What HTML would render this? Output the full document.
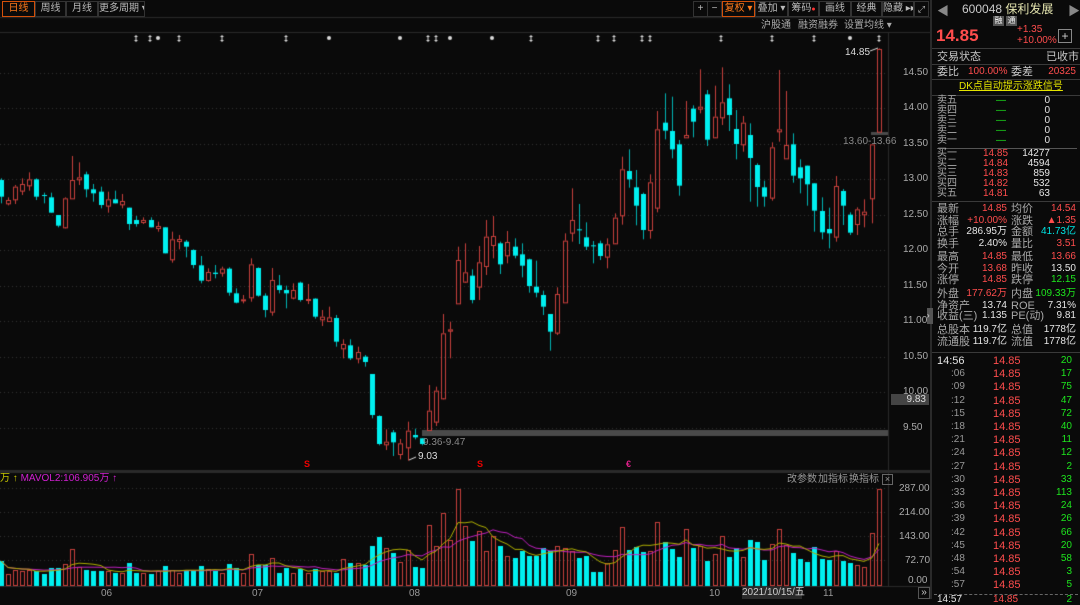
<!DOCTYPE html>
<html><head><meta charset="utf-8">
<style>
*{margin:0;padding:0;box-sizing:border-box}
body{width:1080px;height:599px;background:#0a0a0a;overflow:hidden;position:relative;font-family:"Liberation Sans","Noto Sans CJK SC",sans-serif;font-size:10px;color:#c8c8c8}
.a{position:absolute;white-space:nowrap;line-height:1}
.btn{position:absolute;top:1px;height:16px;border:1px solid #333;color:#bbb;font-size:10px;line-height:14px;text-align:center;white-space:nowrap;overflow:hidden}
.r{color:#ff4d4d}.g{color:#1ee61e}.c{color:#00e5e5}.w{color:#e6e6e6}.y{color:#e6e600}
.hl{position:absolute;height:1px;background:#3a3a3a}
.rt{text-align:right}
</style></head><body>
<canvas id="cv" width="930" height="599" style="position:absolute;left:0;top:0"></canvas>

<div class="btn" style="left:2px;width:33px;border-color:#d2500a;color:#ff7a1a">日线</div>
<div class="btn" style="left:35px;width:31px">周线</div>
<div class="btn" style="left:66px;width:32px">月线</div>
<div class="btn" style="left:98px;width:47px">更多周期 ▾</div>
<div class="btn" style="left:693px;width:15px">+</div>
<div class="btn" style="left:707px;width:15px">−</div>
<div class="btn" style="left:722px;width:33px;border-color:#d2500a;color:#ff7a1a">复权 ▾</div>
<div class="btn" style="left:755px;width:33px">叠加 ▾</div>
<div class="btn" style="left:788px;width:31px">筹码<span style="color:#f33;font-size:7px">●</span></div>
<div class="btn" style="left:819px;width:32px">画线</div>
<div class="btn" style="left:851px;width:31px">经典</div>
<div class="btn" style="left:882px;width:32px">隐藏 ▸▸</div>
<div class="btn" style="left:914px;width:15px;font-size:9px">⤢</div>
<div class="a" style="left:761px;top:21px;color:#aaa">沪股通</div>
<div class="a" style="left:798px;top:21px;color:#aaa">融资融券</div>
<div class="a" style="left:844px;top:21px;color:#aaa">设置均线 ▾</div>

<div class="a" style="left:903px;top:68px;color:#aaa">14.50</div>
<div class="a" style="left:903px;top:103px;color:#aaa">14.00</div>
<div class="a" style="left:903px;top:139px;color:#aaa">13.50</div>
<div class="a" style="left:903px;top:174px;color:#aaa">13.00</div>
<div class="a" style="left:903px;top:210px;color:#aaa">12.50</div>
<div class="a" style="left:903px;top:245px;color:#aaa">12.00</div>
<div class="a" style="left:903px;top:281px;color:#aaa">11.50</div>
<div class="a" style="left:903px;top:316px;color:#aaa">11.00</div>
<div class="a" style="left:903px;top:352px;color:#aaa">10.50</div>
<div class="a" style="left:903px;top:387px;color:#aaa">10.00</div>
<div class="a" style="left:891px;top:394px;width:38px;height:11px;background:#444;color:#ddd;text-align:right;padding-right:3px;line-height:11px">9.83</div>
<div class="a" style="left:903px;top:423px;color:#aaa">9.50</div>
<div class="a" style="left:845px;top:48px;color:#ddd">14.85</div>
<div class="a" style="left:843px;top:137px;color:#888">13.60-13.66</div>
<div class="a" style="left:423px;top:438px;color:#888">9.36-9.47</div>
<div class="a" style="left:418px;top:452px;color:#ddd">9.03</div>

<div class="a" style="left:0;top:474px;color:#c8c800">万 ↑ <span style="color:#d020d0">MAVOL2:106.905万 ↑</span></div>
<div class="a" style="left:787px;top:475px;color:#999">改参数</div>
<div class="a" style="left:818px;top:475px;color:#999">加指标</div>
<div class="a" style="left:849px;top:475px;color:#999">换指标</div>
<div class="a" style="left:882px;top:474px;width:11px;height:11px;border:1px solid #666;color:#999;font-size:9px;text-align:center;line-height:9px">×</div>
<div class="a" style="left:899px;top:484px;color:#aaa">287.00</div>
<div class="a" style="left:899px;top:508px;color:#aaa">214.00</div>
<div class="a" style="left:899px;top:532px;color:#aaa">143.00</div>
<div class="a" style="left:905px;top:556px;color:#aaa">72.70</div>
<div class="a" style="left:908px;top:576px;color:#aaa">0.00</div>
<div class="a" style="left:101px;top:589px;color:#999">06</div>
<div class="a" style="left:252px;top:589px;color:#999">07</div>
<div class="a" style="left:409px;top:589px;color:#999">08</div>
<div class="a" style="left:566px;top:589px;color:#999">09</div>
<div class="a" style="left:709px;top:589px;color:#999">10</div>
<div class="a" style="left:742px;top:587px;width:60px;height:12px;background:#2a2a2a;color:#ccc;text-align:center;line-height:12px">2021/10/15/五</div>
<div class="a" style="left:823px;top:589px;color:#999">11</div>
<div class="a" style="left:918px;top:587px;width:12px;height:12px;border:1px solid #555;color:#ccc;text-align:center;line-height:10px">»</div>
<div class="a" style="left:304px;top:460px;color:#e00;font-size:9px;font-weight:bold">S</div>
<div class="a" style="left:477px;top:460px;color:#e00;font-size:9px;font-weight:bold">S</div>
<div class="a" style="left:626px;top:460px;color:#e0208a;font-size:9px;font-weight:bold">€</div>

<div class="a" style="left:930px;top:0;width:2px;height:599px;background:#2a2a2a"></div>
<div class="a" style="left:927px;top:308px;width:6px;height:16px;background:#555;color:#ddd;font-size:8px;line-height:16px">›</div>
<div class="a" style="left:937px;top:5px;color:#888;font-size:12px">◀</div>
<div class="a" style="left:1068px;top:5px;color:#888;font-size:12px">▶</div>
<div class="a" style="left:962px;top:3px;font-size:12px;color:#ccc">600048 <span style="color:#e6e6b0">保利发展</span></div>
<div class="a" style="left:993px;top:16px;width:11px;height:10px;background:#555;color:#eee;font-size:8px;text-align:center;line-height:10px">融</div>
<div class="a" style="left:1006px;top:16px;width:11px;height:10px;background:#555;color:#eee;font-size:8px;text-align:center;line-height:10px">通</div>
<div class="a r" style="left:936px;top:27px;font-size:17px;font-weight:bold">14.85</div>
<div class="a r" style="left:1017px;top:25px">+1.35</div>
<div class="a r" style="left:1017px;top:36px">+10.00%</div>
<div class="a" style="left:1058px;top:29px;width:14px;height:14px;border:1px solid #888;color:#ccc;text-align:center;line-height:12px;font-size:12px">+</div>
<div class="hl" style="left:932px;top:48px;width:148px"></div>
<div class="a" style="left:937px;top:52px;font-size:11px">交易状态</div>
<div class="a" style="left:1046px;top:52px;font-size:11px">已收市</div>
<div class="hl" style="left:932px;top:64px;width:148px"></div>
<div class="a" style="left:937px;top:67px;font-size:11px">委比</div>
<div class="a r" style="left:968px;top:67px">100.00%</div>
<div class="a" style="left:1011px;top:67px;font-size:11px">委差</div>
<div class="a r rt" style="left:1040px;top:67px;width:36px">20325</div>
<div class="hl" style="left:932px;top:79px;width:148px"></div>
<div class="a y" style="left:959px;top:82px;text-decoration:underline">DK点自动提示涨跌信号</div>
<div class="hl" style="left:932px;top:95px;width:148px"></div>
<div id="rp"></div>

<script>
var rp=document.getElementById('rp'),h='';
function t(x,y,s,cl,st){h+='<div class="a '+(cl||'')+'" style="left:'+x+'px;top:'+y+'px;'+(st||'')+'">'+s+'</div>';}
function tr(x,y,w,s,cl){h+='<div class="a rt '+(cl||'')+'" style="left:'+x+'px;top:'+y+'px;width:'+w+'px">'+s+'</div>';}
var sells=['卖五','卖四','卖三','卖二','卖一'];
for(var i=0;i<5;i++){var y=96+i*10;t(937,y,sells[i],'','color:#aaa');t(996,y,'—','g');tr(1020,y,30,'0','w');}
h+='<div class="hl" style="left:937px;top:148px;width:140px;background:#555"></div>';
var buys=[['买一','14.85','14277'],['买二','14.84','4594'],['买三','14.83','859'],['买四','14.82','532'],['买五','14.81','63']];
for(var i=0;i<5;i++){var y=149+i*10;t(937,y,buys[i][0],'','color:#aaa');t(983,y,buys[i][1],'r');tr(1010,y,40,buys[i][2],'w');}
h+='<div class="hl" style="left:932px;top:201px;width:148px"></div>';
var st=[[209,'最新','14.85','r','均价','14.54','r'],[221,'涨幅','+10.00%','r','涨跌','▲1.35','r'],[232,'总手','286.95万','w','金额','41.73亿','c'],[244,'换手','2.40%','w','量比','3.51','r'],[257,'最高','14.85','r','最低','13.66','r'],[269,'今开','13.68','r','昨收','13.50','w'],[280,'涨停','14.85','r','跌停','12.15','g'],[294,'外盘','177.62万','r','内盘','109.33万','g'],[306,'净资产','13.74','w','ROE','7.31%','w'],[316,'收益(三)','1.135','w','PE(动)','9.81','w'],[330,'总股本','119.7亿','w','总值','1778亿','w'],[342,'流通股','119.7亿','w','流值','1778亿','w']];
st.forEach(function(r){var y=r[0]-5;t(937,y,r[1],'','color:#aaa;font-size:11px');tr(962,y,45,r[2],r[3]);t(1011,y,r[4],'','color:#aaa;font-size:11px');tr(1030,y,46,r[5],r[6]);});
h+='<div class="hl" style="left:932px;top:352px;width:148px"></div>';
var tk=[['14:56',20],[':06',17],[':09',75],[':12',47],[':15',72],[':18',40],[':21',11],[':24',12],[':27',2],[':30',33],[':33',113],[':36',24],[':39',26],[':42',66],[':45',20],[':48',58],[':54',3],[':57',5]];
tk.forEach(function(r,i){var y=356+i*13.2;if(i==0)t(937,y,r[0],'w','font-size:11px');else t(951,y,r[0],'','color:#999');t(993,y,'14.85','r','font-size:11px');tr(1040,y,32,r[1],'g');});
h+='<div class="a" style="left:934px;top:594px;width:144px;border-top:1px dashed #666"></div>';
t(937,595,'14:57','w');t(993,595,'14.85','r');tr(1040,595,32,'2','g');
rp.innerHTML=h;

var cv=document.getElementById('cv'),c=cv.getContext('2d');
c.fillStyle='#2a2a2a';c.fillRect(0,17,930,1);c.fillRect(0,32,930,1);c.fillRect(0,470,930,3);c.fillRect(888,33,1,554);c.fillRect(0,586,930,1);
c.strokeStyle='#333';c.setLineDash([1,3]);c.lineWidth=1;
[73,108,144,179,215,250,286,321,357,392,428,488,512,536,560].forEach(function(y){c.beginPath();c.moveTo(0,y+.5);c.lineTo(888,y+.5);c.stroke();});
c.setLineDash([]);
c.fillStyle='#ddd';
var mk=[[136,0],[150,0],[158,1],[179,0],[222,0],[286,0],[329,1],[400,1],[428,0],[436,0],[450,1],[492,1],[531,0],[598,0],[614,0],[642,0],[650,0],[721,0],[772,0],[814,0],[850,1],[879,0]];
mk.forEach(function(m){if(m[1]){c.beginPath();c.arc(m[0],38,2,0,7);c.fill();}else{c.fillRect(m[0]-.5,35,1,7);c.fillRect(m[0]-1.5,36,3,1);c.fillRect(m[0]-1.5,40,3,1);}});
c.fillStyle='#4a4a4a';c.fillRect(422,430,466,6);c.fillRect(871,132,17,3);
var A=[['c',120,170,115,190],['r',180,190,172,196],['r',140,178,135,192],['r',132,152,115,165],['r',118,136,97,152],['c',118,170,115,180],['c',165,168,158,190],['c',172,218,158,218],['c',225,257,225,262],['r',175,262,172,265],['r',120,175,48,175],['r',112,118,67,135],['c',103,148,95,172],['c',148,160,132,185],['c',155,195,140,205],['r',178,197,155,218],['c',178,190,152,190],['r',183,193,162,205],['c',203,252,203,270],['c',240,252,228,260],['r',240,246,232,252],['c',240,262,232,262],['r',258,264,245,275],['c',262,340,262,340],['r',298,358,275,368],['r',297,303,285,328],['c',305,320,300,352],['c',330,375,328,385],['c',376,422,348,430],['r',396,420,385,425],['c',398,402,375,415],['r',386,398,380,410],['c',386,458,382,467],['c',460,488,445,490],['r',478,480,465,490],['r',373,472,355,485],['c',384,467,382,470],['c',467,510,460,532],['r',420,515,384,527],['c',436,450,405,460],['c',450,460,437,505],['r',450,473,430,478],['c',428,480,425,485],['r',477,480,432,492],['c',476,530,475,536],['r',530,538,510,558],['r',532,543,500,543],['c',534,605,525,620],['r',612,625,598,655],['c',616,655,598,660],['r',636,655,620,670],['c',650,666,645,680],['c',702,825,702,835],['c',828,912,826,916],['r',905,913,868,930],['c',877,907,870,948],['r',910,942,897,958],['r',872,922,845,962],['c',885,892,866,898],['c',895,912,895,916],['r',812,870,735,870],['r',752,845,740,858],['r',580,775,522,778]];
var B=[['r',868,872,845,955],['r',660,790,620,790],['r',697,725,610,728],['c',707,780,688,790],['r',667,740,618,780],['r',590,678,540,705],['r',588,615,528,655],['c',610,673,605,702],['r',606,646,573,670],['c',620,647,595,655],['c',643,677,610,712],['c',658,738,656,758],['c',740,758,662,772],['c',765,800,752,825],['c',822,875,822,932],['r',762,878,742,885],['r',602,787,580,787],['r',540,578,445,605],['c',568,570,492,612],['c',592,620,547,630],['c',616,619,603,670],['c',610,648,602,660],['r',613,650,595,685],['r',533,610,520,612],['r',388,526,350,554],['c',393,418,328,443],['c',442,497,390,556],['c',462,570,458,598],['r',427,570,403,596],['r',268,503,213,517],['c',248,272,160,298],['c',273,328,170,355],['c',313,437,300,467],['r',285,292,183,293],['c',206,245,196,292],['r',200,206,88,220],['c',163,299,150,318],['r',230,292,137,294],['r',187,232,82,255],['c',175,225,133,273],['c',267,312,210,358],['r',248,313,228,335],['c',285,354,250,485],['c',375,441,370,500],['c',442,470,422,500],['r',322,473,307,482],['r',268,274,90,305],['r',315,355,153,355],['c',313,407,280,428],['c',382,415,358,460],['c',377,433,377,497],['c',430,512,430,575],['c',513,577,472,598],['c',567,580,503,625],['r',438,590,408,605],['c',453,497,447,555],['c',524,578,517,585],['r',508,552,502,585],['r',515,523,478,562],['r',313,475,313,550],['r',27,275,25,275]];
var D=[];A.forEach(function(a){D.push([a[0],a[1]/3+140,a[2]/3+140,a[3]/3+140,a[4]/3+140]);});
B.forEach(function(a){D.push([a[0],a[1]/3+40,a[2]/3+40,a[3]/3+40,a[4]/3+40]);});
var RED='#c8403c',CY='#00f0f0';
function X(i){return Math.round(0.7+i*7.138);}
D.forEach(function(d,i){var x=X(i);
 if(d[0]=='c'){c.fillStyle='#00b4b4';c.fillRect(x,d[3],1,d[4]-d[3]);c.fillStyle=CY;c.fillRect(x-2,d[1],5,Math.max(1,d[2]-d[1]));}
 else{c.fillStyle=RED;c.fillRect(x,d[3],1,d[1]-d[3]);c.fillRect(x,d[2],1,Math.max(0,d[4]-d[2]));c.strokeStyle=RED;c.lineWidth=1;c.strokeRect(x-2+.5,d[1]+.5,4,Math.max(1,d[2]-d[1]));}
});
c.strokeStyle='#ddd';c.beginPath();c.moveTo(870,51);c.lineTo(878,48);c.stroke();
c.beginPath();c.moveTo(409,460);c.lineTo(416,457);c.stroke();
var V=[25,12,16,15,16,15,12,18,18,22,37,19,16,15,15,15,13,13,23,13,13,12,15,20,16,13,15,15,20,17,15,13,22,18,13,32,21,21,28,13,18,13,17,13,17,15,15,13,27,23,23,21,40,49,38,33,24,36,19,18,61,40,73,46,97,60,45,55,35,50,40,30,28,35,30,30,38,35,40,38,35,28,30,14,14,23,36,59,36,39,34,35,64,44,37,29,57,38,40,25,32,50,29,38,29,46,44,26,42,57,41,33,27,24,39,27,26,35,25,23,21,19,53,97];
V.forEach(function(v,i){var x=X(i),d=D[i]||['r'];if(d[0]=='c'){c.fillStyle=CY;c.fillRect(x-2,586-v,5,v);}else{c.strokeStyle=RED;c.strokeRect(x-2+.5,586-v+.5,4,v-1);}});
function ma(n,col){c.strokeStyle=col;c.lineWidth=1;c.beginPath();for(var i=0;i<V.length;i++){var s=0,k=0;for(var j=Math.max(0,i-n+1);j<=i;j++){s+=V[j];k++;}var y=586-s/k;if(i==0)c.moveTo(X(i),y);else c.lineTo(X(i),y);}c.stroke();}
ma(10,'#c020c0');ma(5,'#b0b000');
</script>
</body></html>
